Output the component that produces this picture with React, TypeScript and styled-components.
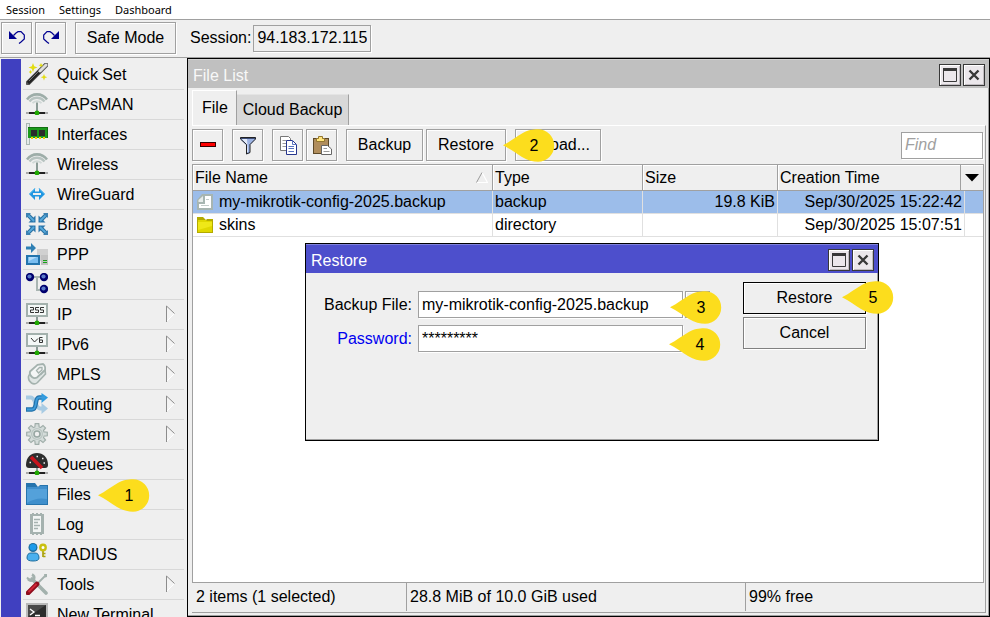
import React from "react";
import styled, { createGlobalStyle } from "styled-components";

const face = "#efefef";
const edge = "#a0a0a0";
const ui = '"Liberation Sans", Arial, sans-serif';

const GlobalStyle = createGlobalStyle`
  *, *::before, *::after { box-sizing: border-box; }
  body { margin: 0; background: ${face}; overflow: hidden; }
  body, button, input, select, table { font: 16px/18px ${ui}; color: #000; }
  button, input, select { margin: 0; padding: 0; border-radius: 0; outline: none; }
  svg { display: block; flex: none; }
`;

/* ---------- page frame ---------- */

const Page = styled.div`
  display: flex;
  flex-direction: column;
  height: 100vh;
  background: ${face};
`;

const MenuBar = styled.nav`
  display: flex;
  height: 20px;
  padding: 0 6px;
  gap: 14px;
  background: #fff;
  border-bottom: 1px solid ${edge};
`;

const MenuButton = styled.button`
  border: 0;
  background: none;
  font: 11px/18px "Noto Sans", "Open Sans", sans-serif;
`;

const MainToolbar = styled.div`
  display: flex;
  align-items: flex-start;
  height: 38px;
  padding: 2px 1px;
  border-bottom: 1px solid ${edge};
`;

const Button = styled.button<{ $w?: number; $ml?: number; $line?: string }>`
  display: flex;
  align-items: center;
  justify-content: center;
  position: relative;
  flex: none;
  height: 32px;
  width: ${(p) => p.$w ?? 31}px;
  margin-left: ${(p) => p.$ml ?? 0}px;
  background: ${face};
  border: 1px solid ${(p) => p.$line ?? edge};
  box-shadow: inset 1px 1px #fff, 1px 1px #fff;
`;

const SessionLabel = styled.label`
  display: flex;
  align-items: center;
  height: 32px;
  margin-left: 14px;
  gap: 2px;
`;

const Field = styled.input<{ $face?: boolean; $w?: string }>`
  height: 27px;
  width: ${(p) => p.$w ?? "100%"};
  padding: 0 3px;
  background: ${(p) => (p.$face ? face : "#fff")};
  border: 1px solid ${edge};
  box-shadow: 1px 1px #fff;
  &::placeholder { color: ${edge}; font-style: italic; opacity: 1; }
`;

const Body = styled.div`
  display: flex;
  flex: 1;
  min-height: 0;
`;

/* ---------- sidebar ---------- */

const Sidebar = styled.aside`
  display: flex;
  flex: none;
  width: 187px;
  padding: 1px 3px 0 1px;
  overflow: hidden;
`;

const Stripe = styled.div`
  flex: none;
  width: 20px;
  background: #4040c0;
`;

const NavList = styled.ul`
  flex: 1;
  margin: 1px 0 0 2px;
  padding: 0;
  list-style: none;
`;

const NavItem = styled.li`
  position: relative;
  height: 30px;
  border-bottom: 1px solid #d8d8d8;
`;

const NavButton = styled.button`
  display: flex;
  align-items: center;
  gap: 9px;
  width: 100%;
  height: 28px;
  padding: 0 9px 0 3px;
  border: 0;
  background: none;
`;

const NavText = styled.span`
  flex: 1;
  padding-top: 2px;
  text-align: left;
  white-space: nowrap;
`;

/* ---------- windows ---------- */

const Desktop = styled.main`
  position: relative;
  flex: 1;
  min-width: 0;
  display: flex;
`;

const FileWindow = styled.section`
  display: flex;
  flex-direction: column;
  flex: 1;
  min-width: 0;
  border: 1px solid #000;
  background: ${face};
  box-shadow: inset -1px -1px ${edge};
`;

const RestoreWindow = styled.section`
  position: absolute;
  left: 118px;
  top: 185px;
  width: 574px;
  height: 198px;
  border: 1px solid #000;
  background: ${face};
  box-shadow: inset -1px -1px ${edge};
`;

const TitleBar = styled.header<{ $active?: boolean }>`
  display: flex;
  align-items: center;
  flex: none;
  gap: 2px;
  height: 29px;
  padding: 2px 4px 0 5px;
  color: ${(p) => (p.$active ? "#fff" : "#f8f8f8")};
  background: ${(p) => (p.$active ? "#4d4fcc" : "#c0c0c0")};
  border-top: 1px solid ${(p) => (p.$active ? "#8082dc" : "#d0d0d0")};
`;

const Title = styled.h2`
  flex: 1;
  margin: 0;
  padding-top: 2px;
  font: inherit;
`;

const TitleButton = styled.button`
  display: flex;
  align-items: center;
  justify-content: center;
  width: 22px;
  height: 22px;
  border: 1px solid #383838;
  background: #ebe7eb;
  box-shadow: inset 1px 1px #fff, inset -1px -1px #c0bcc0;
`;

const Tabs = styled.div`
  display: flex;
  align-items: flex-end;
  flex: none;
  height: 37px;
  padding: 2px 4px 0 4px;
`;

const Tab = styled.button<{ $on?: boolean }>`
  height: ${(p) => (p.$on ? 35 : 31)}px;
  padding: ${(p) => (p.$on ? "0 8px 0 9px" : "0 6px 0 6px")};
  border: 0;
  border-top: 1px solid ${(p) => (p.$on ? "#fff" : "#e4e4e4")};
  border-left: ${(p) => (p.$on ? "1px solid #fff" : 0)};
  border-right: 1px solid ${edge};
  background: ${(p) => (p.$on ? face : "#d8d8d8")};
`;

const TabPanel = styled.div`
  display: flex;
  flex-direction: column;
  flex: 1;
  min-height: 0;
  margin: 0 3px 3px 4px;
  padding-right: 1px;
  border-top: 1px solid #fff;
  border-right: 1px solid ${edge};
  border-bottom: 1px solid ${edge};
`;

const Tools = styled.div`
  display: flex;
  flex: none;
  align-items: center;
  height: 38px;
  padding: 0 1px 0 0;
`;

const Spacer = styled.div`
  flex: 1;
`;

/* ---------- table ---------- */

const TableBox = styled.div`
  flex: 1;
  min-height: 0;
  background: #fff;
  border: 1px solid ${edge};
`;

const Table = styled.table`
  width: 100%;
  table-layout: fixed;
  border-collapse: separate;
  border-spacing: 0;
`;

const Col = styled.col<{ $w?: number }>`
  width: ${(p) => (p.$w ? `${p.$w}px` : "auto")};
`;

const Th = styled.th`
  height: 26px;
  padding: 0 0 0 2px;
  font-weight: 400;
  text-align: left;
  background: ${face};
  border-right: 1px solid ${edge};
  border-bottom: 1px solid ${edge};
  box-shadow: inset 1px 1px #fff;
  &:last-child { border-right: 0; }
`;

const HeadCell = styled.div`
  display: flex;
  align-items: center;
  justify-content: space-between;
  height: 25px;
  padding-right: 4px;
`;

const ColumnMenuHead = styled(HeadCell)`
  padding-right: 0;
`;

const ColumnMenu = styled.button`
  display: flex;
  align-items: center;
  justify-content: center;
  width: 23px;
  height: 25px;
  border: 0;
  border-left: 1px solid ${edge};
  background: none;
`;

const Row = styled.tr<{ $selected?: boolean }>`
  background: ${(p) => (p.$selected ? "#9cbdea" : "#fff")};
`;

const Td = styled.td<{ $right?: boolean }>`
  height: 23px;
  padding: 0 2px;
  white-space: nowrap;
  text-align: ${(p) => (p.$right ? "right" : "left")};
  border-right: 1px solid #e0e0e0;
  border-bottom: 1px solid #e0e0e0;
  &:last-child { border-right: 0; }
`;

const FileCell = styled.span`
  display: flex;
  align-items: center;
  gap: 6px;
  padding-left: 2px;
`;

const StatusBar = styled.footer`
  display: grid;
  grid-template-columns: 214px 339px 1fr;
  flex: none;
  height: 29px;
  padding-bottom: 1px;
  margin-left: 1px;
`;

const Status = styled.div`
  padding: 5px 3px 0;
  border-right: 1px solid ${edge};
  white-space: nowrap;
  &:last-child { border-right: 0; }
`;

/* ---------- restore form ---------- */

const Form = styled.form`
  display: grid;
  grid-template-columns: 1fr 123px;
  column-gap: 33px;
  padding: 9px 12px 0 8px;
`;

const Fields = styled.div`
  display: grid;
  grid-template-columns: 98px 1fr 25px;
  grid-auto-rows: 27px;
  row-gap: 7px;
  column-gap: 2px;
  padding-top: 9px;
`;

const FieldLabel = styled.label<{ $color?: string }>`
  display: flex;
  align-items: center;
  justify-content: flex-end;
  color: ${(p) => p.$color ?? "#000"};
`;

const FieldSlot = styled.div`
  position: relative;
  margin-left: 4px;
`;

const Picker = styled.select`
  display: block;
  appearance: none;
  width: 100%;
  height: 27px;
  padding: 0 3px;
  background: #fff;
  border: 1px solid ${edge};
  box-shadow: 1px 1px #fff;
`;

const PickerButton = styled.button`
  display: flex;
  align-items: center;
  justify-content: center;
  height: 27px;
  border: 1px solid ${edge};
  background: ${face};
  box-shadow: inset 1px 1px #fff, 1px 1px #fff;
`;

const Actions = styled.div`
  display: flex;
  flex-direction: column;
  gap: 3px;
`;

/* ---------- numbered callouts ---------- */

const Pin = styled.span<{ $x: number; $y: number }>`
  position: absolute;
  left: ${(p) => p.$x}px;
  top: ${(p) => p.$y}px;
  z-index: 2;
  display: grid;
  width: 52px;
  height: 33px;
  pointer-events: none;
`;

const PinShape = styled.svg`
  grid-area: 1 / 1;
`;

const PinText = styled.span`
  grid-area: 1 / 1;
  align-self: center;
  padding-left: 10px;
  text-align: center;
  z-index: 1;
`;

function Callout({ n, x, y }: { n: number; x: number; y: number }) {
  return (
    <Pin $x={x} $y={y}>
      <PinShape width="52" height="33" viewBox="0 0 52 33">
        <path d="M0 16.3C8 12 13 8 19 4.500C25 1 30 .3 35 .3A16.200 16.200 0 0 1 35 32.700C30 32.700 25 31.500 19 28C13 24.500 8 20.500 0 16.300Z" fill="#fcdd1d" />
      </PinShape>
      <PinText>{n}</PinText>
    </Pin>
  );
}

/* ---------- icons ---------- */

const Ico = ({ children, size = 22 }: { children: React.ReactNode; size?: number }) => (
  <svg width={size} height={size} viewBox={`0 0 ${size} ${size}`} aria-hidden="true">
    {children}
  </svg>
);

const Base = () => (
  <>
    <path d="M0 20H22" stroke="#aaa" strokeWidth="2" />
    <path d="M3 20H19" stroke="#222" strokeWidth="2" />
    <path d="M11 13V19" stroke="#8b9b96" strokeWidth="2" />
    <circle cx="11" cy="20" r="2.400" fill="#1fa800" />
  </>
);

const WandIcon = () => (
  <Ico>
    <path d="M2 20L20 2" stroke="#555" strokeWidth="4.800" strokeLinecap="round" />
    <path d="M2 20L14 8" stroke="#222" strokeWidth="3.400" />
    <path d="M3 18L13 8" stroke="#777" strokeWidth="1" />
    <path d="M14 8L20 2" stroke="#ddd" strokeWidth="3" strokeLinecap="round" />
    <path d="M7 0L8.200 3.200L11.500 4.500L8.200 5.700L7 9L5.800 5.700L2.500 4.500L5.800 3.200Z" fill="#e2dc10" />
    <path d="M18 11L18.900 13.300L21.300 14.200L18.900 15.100L18 17.500L17.100 15.100L14.700 14.200L17.100 13.300Z" fill="#e2dc10" />
    <path d="M15 0L15.700 1.600L17.300 2.200L15.700 2.900L15 4.500L14.300 2.900L12.700 2.200L14.300 1.600Z" fill="#e2dc10" />
    <path d="M3 9H6M4.500 7.500V10.500" stroke="#e2dc10" />
  </Ico>
);

const AntennaIcon = () => (
  <Ico>
    <path d="M1 6.500C4 2.500 7.500 1.400 11 1.400S18 2.500 21 6.500" fill="none" stroke="#9dadA8" strokeWidth="2.600" />
    <path d="M3.500 8.500C6 5.600 8.500 4.800 11 4.800S16 5.600 18.500 8.500" fill="none" stroke="#b7c3c0" strokeWidth="2.400" />
    <path d="M6.500 10.200C8 8.700 9.500 8.100 11 8.100S14 8.700 15.500 10.200" fill="none" stroke="#d0d8d6" strokeWidth="1.800" />
    <path d="M11 9.500V18" stroke="#8b9b96" strokeWidth="2" />
    <Base />
  </Ico>
);

const CardIcon = () => (
  <Ico>
    <rect x="0.500" y="0.500" width="3" height="21" fill="#e4eae9" stroke="#aab7b4" />
    <rect x="2" y="4" width="20" height="11" fill="#1c9a1c" />
    <path d="M2 4.500H22M21.500 4V15" stroke="#127012" />
    <rect x="5" y="7" width="6" height="6" fill="#2b2b2b" />
    <rect x="13" y="7" width="6" height="6" fill="#2b2b2b" />
    <path d="M5 15H20" stroke="#f2d20a" strokeWidth="2" strokeDasharray="2 2" />
  </Ico>
);

const WireGuardIcon = () => (
  <Ico>
    <path d="M3 11L9 5V8.500H13V5L19 11L13 17V13.500H9V17Z" fill="#2196e0" />
    <path d="M7 11H15" stroke="#efefef" strokeWidth="2" />
    <path d="M3.500 11L9 5.500M13 5.500L18.500 11" stroke="#5cc0f5" strokeWidth="1" />
  </Ico>
);

const BridgeIcon = () => (
  <Ico>
    {[0, 90, 180, 270].map((a) => (
      <g key={a} transform={`rotate(${a} 11 11)`}>
        <path d="M1 1L7 7" stroke="#2c6f9e" strokeWidth="4" />
        <path d="M9.500 2.500V9.500H2.500Z" fill="#2c77ab" />
        <path d="M1.500 1.500L8 8" stroke="#55a9dc" strokeWidth="1.800" />
        <path d="M0 0H5L0 5Z" fill="#3d82b2" />
      </g>
    ))}
  </Ico>
);

const PppIcon = () => (
  <Ico>
    <rect x="11" y="6" width="11" height="12" fill="#d0d0d0" />
    <rect x="15" y="12" width="7" height="10" fill="#c2c2c2" />
    <path d="M17 17.500H21M17 19.500H21" stroke="#17a317" />
    <path d="M0 3.500H5V0L10 5L5 10V6.500H0Z" fill="#2f80b4" />
    <rect x="1" y="13" width="12" height="8" fill="#79bdf0" stroke="#2374ad" strokeWidth="2" />
    <path d="M3 14H11L3 18Z" fill="#b3dbfa" />
  </Ico>
);

const MeshIcon = () => (
  <Ico>
    <path d="M4 4H18M11 4V17H18" fill="none" stroke="#a9b5b2" strokeWidth="2" />
    {[[4, 4], [18, 4], [18, 16]].map(([x, y]) => (
      <g key={`${x}-${y}`}>
        <circle cx={x} cy={y} r="4.200" fill="#00006e" />
        <circle cx={x - 0.500} cy={y - 0.500} r="2.100" fill="#5a7ac8" />
      </g>
    ))}
  </Ico>
);

const ScreenFrame = ({ children }: { children: React.ReactNode }) => (
  <Ico>
    <Base />
    <rect x="1" y="1" width="20" height="12" fill="#f4f8f7" stroke="#a3b1ad" strokeWidth="2" />
    {children}
  </Ico>
);

const IpIcon = () => (
  <ScreenFrame>
    <path
      d="M4 4.500H7.500V7H4.500V9.500H8M13 4.500H9.500V7H12.500V9.500H9M18 4.500H14.500V7H17.500V9.500H14"
      fill="none"
      stroke="#333"
    />
  </ScreenFrame>
);

const Ipv6Icon = () => (
  <ScreenFrame>
    <path d="M5 5L8.500 9L12 5.500M16.500 4.500H13.500V9.500H16.500V7H13.500" fill="none" stroke="#333" />
  </ScreenFrame>
);

const TagIcon = () => (
  <Ico>
    <path d="M3.500 11.500L7 8L15 11L19 6.500L19.500 11L11.500 19.500Q8.500 22 5.500 20Q2 17.500 2.500 13.500Z" fill="#dfe5e4" stroke="#a4b2ae" strokeWidth="1.600" />
    <path d="M4 8.500L11.500 1.800L17 1Q19.800 3 19 7L11 14.500Q8.500 16 6 14Q3 11.500 4 8.500Z" fill="#f4f6f6" stroke="#a4b2ae" strokeWidth="1.800" />
    <path d="M10.500 7.500L13.500 4.500H16V7L12.500 10Z" fill="#efefef" stroke="#a4b2ae" strokeWidth="1.300" />
  </Ico>
);

const RoutingIcon = () => (
  <Ico>
    <path d="M0 4.500H5C9 4.500 10 15.500 14 15.500H17" fill="none" stroke="#a8cbe3" strokeWidth="4" />
    <path d="M15.500 10L22 15.500L15.500 21Z" fill="#a8cbe3" />
    <path d="M0 16.500H6C12 16.500 8 4.500 13 4.500H17" fill="none" stroke="#2372ab" strokeWidth="4.400" />
    <path d="M15.500 0L22 4.500L15.500 10Z" fill="#2d9be0" />
    <path d="M1 16.500H6C12 16.500 8 4.500 13 4.500H19" fill="none" stroke="#3f9ddb" strokeWidth="1.800" />
  </Ico>
);

const GearIcon = () => (
  <Ico>
    {[0, 45, 90, 135, 180, 225, 270, 315].map((a) => (
      <path key={a} d="M8.600 6L9.200 .7H12.800L13.400 6Z" transform={`rotate(${a} 11 11)`} fill="#d3dbd9" stroke="#a0aeaa" strokeWidth="1.200" />
    ))}
    <circle cx="11" cy="11" r="6.800" fill="#d9e0de" />
    <circle cx="11" cy="11" r="5.400" fill="none" stroke="#bcc7c4" strokeWidth="1.400" />
    <circle cx="11" cy="11" r="3" fill="#efefef" stroke="#98a7a3" strokeWidth="1.600" />
  </Ico>
);

const GaugeIcon = () => (
  <Ico>
    <Base />
    <path d="M0 12C0 4 5 0 11 0S22 4 22 12C22 14 21 15 19 15H3C1 15 0 14 0 12Z" fill="#2d2d2d" />
    <path d="M3.500 9.500H5M5.500 5H7M10.500 3.500H12M16 5.500H17.500M17.500 10H19" stroke="#eee" strokeWidth="1.500" />
    <path d="M5 4L16 15" stroke="#c8141d" strokeWidth="3.600" />
  </Ico>
);

const FolderIcon = () => (
  <Ico>
    <path d="M0 0H9L12 4L14 2H22V22H0Z" fill="#2674ad" />
    <path d="M1 4H12L14 3H21V21H1Z" fill="#3f8fcc" />
    <path d="M1 6H21V16Q10 14 1 20Z" fill="#54a1da" />
  </Ico>
);

const LogIcon = () => (
  <Ico>
    <path d="M4 1H6V0H8V1H10V0H12V1H14V0H16V1H18V21H16V22H14V21H12V22H10V21H8V22H6V21H4Z" fill="#a5b2af" />
    <rect x="7" y="3" width="8" height="16" fill="#f2f5f4" />
    <path d="M8 6.500H14M8 9.500H12M8 12.500H14M8 15.500H12" stroke="#a5b2af" strokeWidth="1.400" />
  </Ico>
);

const RadiusIcon = () => (
  <Ico>
    <circle cx="7" cy="4.500" r="4.500" fill="#1d6d9e" />
    <circle cx="7" cy="4.300" r="3.300" fill="#1c9bea" />
    <path d="M1 15Q1 10 5 10H9Q13 10 13 15Q13 18 7 18T1 15Z" fill="#4ab0ee" stroke="#1d6d9e" />
    <path d="M17 7V14M17 10.500H19.500M17 13.500H19.500" stroke="#aaa20c" strokeWidth="1.700" />
    <circle cx="17" cy="4.500" r="2.700" fill="#fff" stroke="#c9c010" strokeWidth="2.400" />
  </Ico>
);

const ToolsIcon = () => (
  <Ico>
    <path d="M6 6L20 20" stroke="#a3b1ad" strokeWidth="3.600" strokeLinecap="round" />
    <path d="M2 6Q5 9 8 6Q9 3 6 1.500" fill="none" stroke="#a3b1ad" strokeWidth="2.600" />
    <path d="M1 4.500L3.500 7" stroke="#a3b1ad" strokeWidth="2" />
    <path d="M11 11L20 2" stroke="#a3b1ad" strokeWidth="1.800" />
    <path d="M18 1H21V4L19 4.500Z" fill="#a3b1ad" />
    <path d="M2 20L11 11" stroke="#8e0d1c" strokeWidth="4.600" strokeLinecap="round" />
    <path d="M2.500 19L10.500 11" stroke="#d02637" strokeWidth="2" />
  </Ico>
);

const TerminalIcon = () => (
  <Ico>
    <rect width="22" height="22" fill="#b9b9b9" />
    <rect x="2" y="2" width="18" height="18" fill="#2c2c2c" />
    <path d="M20 2L2 14V2Z" fill="#4a4a4a" />
    <path d="M4 6L8 9L4 12M9 12.500H14" fill="none" stroke="#fff" strokeWidth="1.300" />
  </Ico>
);

const SubmenuArrow = () => (
  <svg width="9" height="18" viewBox="0 0 9 18" aria-hidden="true">
    <path d="M.5 1V17L8.500 8.500Z" fill="#f4f4f4" />
    <path d="M.5 16.500L8.500 8.500" stroke="#fff" />
    <path d="M.5 17V1L8.500 8.500" fill="none" stroke="#8c8c8c" />
  </svg>
);

const UndoIcon = ({ flip }: { flip?: boolean }) => (
  <svg width="18" height="14" viewBox="0 0 18 14" aria-hidden="true">
    <g transform={flip ? "translate(18 0) scale(-1 1)" : undefined}>
      <path d="M1 0V8H9Z" fill="#000090" />
      <path d="M5.500 4.500L8 2L10 .7H13L16.300 4V8L13 11L11 12.500" fill="none" stroke="#000090" strokeWidth="1.200" />
    </g>
  </svg>
);

const MinusIcon = () => (
  <Ico size={16}>
    <rect x="0.500" y="5.500" width="15" height="4" fill="#f00" stroke="#300" />
  </Ico>
);

const FunnelIcon = () => (
  <Ico size={20}>
    <path d="M2 2H18V4L12 10V18L8 19.500V10L2 4Z" fill="#9db4e4" />
    <path d="M4 4H9L10 17H9V10Z" fill="#e3ebfa" />
    <path d="M2.500 2.500H17.500V4L12 9.500V17.500L8.500 19V9.500L2.500 4Z" fill="none" stroke="#222" />
    <path d="M3 3.500H17" stroke="#3c4d78" />
  </Ico>
);

const CopyIcon = () => (
  <Ico size={20}>
    <path d="M2.500 1.500H10.500L12.500 3.500V15.500H2.500Z" fill="#fff" stroke="#777" />
    <path d="M4.500 5.500H8M4.500 8.500H8M4.500 11.500H8" stroke="#999" />
    <path d="M8.500 5.500H14.500L18.500 9.500V19.500H8.500Z" fill="#fff" stroke="#26358c" />
    <path d="M14.500 5.500V9.500H18.500M10.500 11.500H16M10.500 13.500H16M10.500 16.500H16" fill="none" stroke="#5a73c0" />
  </Ico>
);

const PasteIcon = () => (
  <Ico size={20}>
    <rect x="1.500" y="3.500" width="15" height="15" fill="#b08d5c" stroke="#5d4928" />
    <path d="M4.500 6.500V3.500H6.500V1.500H10.500V3.500H12.500V6.500Z" fill="#ffe47c" stroke="#94772f" />
    <path d="M9.500 10.500H15.500L19.500 14V19.500H9.500Z" fill="#fff" stroke="#666" />
    <path d="M11.500 13.500H15M11.500 16.500H17.500" stroke="#999" />
  </Ico>
);

const BackupFileIcon = () => (
  <Ico size={16}>
    <path d="M5 0H16V16H0V6Z" fill="#a7b5b1" />
    <path d="M8 2H14V14H2V10H8Z" fill="#fff" />
    <path d="M6 2V8H1.500V6Z" fill="#e6ebea" />
    <path d="M4 11.500H12M9 5.500H12" stroke="#c3cdca" strokeWidth="1.200" />
  </Ico>
);

const DirectoryIcon = () => (
  <Ico size={16}>
    <path d="M0 0H6L9 3L10 2H16V16H0Z" fill="#b3aa00" />
    <path d="M1 3H9L10 4H15V15H1Z" fill="#e0d800" />
    <path d="M1 5H15V9L1 13Z" fill="#efe818" />
  </Ico>
);

const SortIcon = () => (
  <Ico size={12}>
    <path d="M6 .5L11.500 10.500H.5" fill="none" stroke="#fff" strokeWidth="1.200" />
    <path d="M.5 10.500L6 .5" stroke="#999" />
  </Ico>
);

const DropIcon = () => (
  <svg width="14" height="8" viewBox="0 0 14 8" aria-hidden="true">
    <path d="M0 0H14L7 7.500Z" />
  </svg>
);

const MaxIcon = () => (
  <Ico size={14}>
    <path d="M.5 .5H13.500V13.500H.5Z" fill="none" stroke="#383838" />
    <path d="M0 1.500H14" stroke="#383838" strokeWidth="3" />
  </Ico>
);

const CloseIcon = () => (
  <Ico size={12}>
    <path d="M1.500 1.500L10.500 10.500M10.500 1.500L1.500 10.500" stroke="#383838" strokeWidth="2.400" />
  </Ico>
);

function WindowButtons() {
  return (
    <>
      <TitleButton type="button" aria-label="Maximize"><MaxIcon /></TitleButton>
      <TitleButton type="button" aria-label="Close"><CloseIcon /></TitleButton>
    </>
  );
}

/* ---------- data ---------- */

const nav: { label: string; icon: React.FC; sub?: boolean; pin?: number }[] = [
  { label: "Quick Set", icon: WandIcon },
  { label: "CAPsMAN", icon: AntennaIcon },
  { label: "Interfaces", icon: CardIcon },
  { label: "Wireless", icon: AntennaIcon },
  { label: "WireGuard", icon: WireGuardIcon },
  { label: "Bridge", icon: BridgeIcon },
  { label: "PPP", icon: PppIcon },
  { label: "Mesh", icon: MeshIcon },
  { label: "IP", icon: IpIcon, sub: true },
  { label: "IPv6", icon: Ipv6Icon, sub: true },
  { label: "MPLS", icon: TagIcon, sub: true },
  { label: "Routing", icon: RoutingIcon, sub: true },
  { label: "System", icon: GearIcon, sub: true },
  { label: "Queues", icon: GaugeIcon },
  { label: "Files", icon: FolderIcon, pin: 1 },
  { label: "Log", icon: LogIcon },
  { label: "RADIUS", icon: RadiusIcon },
  { label: "Tools", icon: ToolsIcon, sub: true },
  { label: "New Terminal", icon: TerminalIcon },
];

const files = [
  { name: "my-mikrotik-config-2025.backup", icon: BackupFileIcon, type: "backup", size: "19.8 KiB", time: "Sep/30/2025 15:22:42", selected: true },
  { name: "skins", icon: DirectoryIcon, type: "directory", size: "", time: "Sep/30/2025 15:07:51", selected: false },
];

/* ---------- parts ---------- */

function FileTable() {
  return (
    <TableBox>
      <Table>
        <colgroup>
          <Col />
          <Col $w={150} />
          <Col $w={135} />
          <Col $w={187} />
          <Col $w={18} />
        </colgroup>
        <thead>
          <tr>
            <Th scope="col"><HeadCell>File Name<SortIcon /></HeadCell></Th>
            <Th scope="col">Type</Th>
            <Th scope="col">Size</Th>
            <Th scope="col" colSpan={2}>
              <ColumnMenuHead>
                Creation Time
                <ColumnMenu type="button" aria-label="Columns"><DropIcon /></ColumnMenu>
              </ColumnMenuHead>
            </Th>
          </tr>
        </thead>
        <tbody>
          {files.map((f) => (
            <Row key={f.name} $selected={f.selected}>
              <Td><FileCell><f.icon />{f.name}</FileCell></Td>
              <Td>{f.type}</Td>
              <Td $right>{f.size}</Td>
              <Td $right>{f.time}</Td>
              <Td />
            </Row>
          ))}
        </tbody>
      </Table>
    </TableBox>
  );
}

function RestoreDialog() {
  return (
    <RestoreWindow aria-label="Restore">
      <TitleBar $active>
        <Title>Restore</Title>
        <WindowButtons />
      </TitleBar>
      <Form onSubmit={(e) => e.preventDefault()}>
        <Fields>
          <FieldLabel htmlFor="backup-file">Backup File:</FieldLabel>
          <FieldSlot>
            <Picker id="backup-file" defaultValue={files[0].name}>
              <option>{files[0].name}</option>
            </Picker>
            <Callout n={3} x={252} y={0} />
          </FieldSlot>
          <PickerButton type="button" aria-label="Choose backup file"><DropIcon /></PickerButton>
          <FieldLabel htmlFor="password" $color="#0000f0">Password:</FieldLabel>
          <FieldSlot>
            <Field id="password" defaultValue="*********" autoComplete="off" />
            <Callout n={4} x={251} y={3} />
          </FieldSlot>
        </Fields>
        <Actions>
          <Button type="submit" $w={123} $line="#000">
            Restore
            <Callout n={5} x={98} y={-2} />
          </Button>
          <Button type="button" $w={123} $line="#808080">Cancel</Button>
        </Actions>
      </Form>
    </RestoreWindow>
  );
}

export default function App() {
  return (
    <Page>
      <GlobalStyle />
      <MenuBar>
        <MenuButton type="button">Session</MenuButton>
        <MenuButton type="button">Settings</MenuButton>
        <MenuButton type="button">Dashboard</MenuButton>
      </MenuBar>
      <MainToolbar>
        <Button type="button" aria-label="Undo"><UndoIcon /></Button>
        <Button type="button" aria-label="Redo" $ml={3}><UndoIcon flip /></Button>
        <Button type="button" $w={101} $ml={9}>Safe Mode</Button>
        <SessionLabel>
          Session:
          <Field $face $w="118px" defaultValue="94.183.172.115" readOnly />
        </SessionLabel>
      </MainToolbar>
      <Body>
        <Sidebar>
          <Stripe />
          <NavList>
            {nav.map((item) => (
              <NavItem key={item.label}>
                <NavButton type="button">
                  <item.icon />
                  <NavText>{item.label}</NavText>
                  {item.sub && <SubmenuArrow />}
                </NavButton>
                {item.pin && <Callout n={item.pin} x={75} y={-1} />}
              </NavItem>
            ))}
          </NavList>
        </Sidebar>
        <Desktop>
          <FileWindow aria-label="File List">
            <TitleBar>
              <Title>File List</Title>
              <WindowButtons />
            </TitleBar>
            <Tabs role="tablist">
              <Tab type="button" role="tab" aria-selected="true" $on>File</Tab>
              <Tab type="button" role="tab" aria-selected="false">Cloud Backup</Tab>
            </Tabs>
            <TabPanel role="tabpanel">
              <Tools>
                <Button type="button" aria-label="Remove"><MinusIcon /></Button>
                <Button type="button" aria-label="Filter" $ml={9}><FunnelIcon /></Button>
                <Button type="button" aria-label="Copy" $ml={9}><CopyIcon /></Button>
                <Button type="button" aria-label="Paste" $ml={3}><PasteIcon /></Button>
                <Button type="button" $w={77} $ml={9}>Backup</Button>
                <Button type="button" $w={80} $ml={3}>Restore</Button>
                <Button type="button" $w={86} $ml={9}>
                  Upload...
                  <Callout n={2} x={-13} y={-1} />
                </Button>
                <Spacer />
                <Field $w="82px" placeholder="Find" aria-label="Find" />
              </Tools>
              <FileTable />
              <StatusBar>
                <Status>2 items (1 selected)</Status>
                <Status>28.8 MiB of 10.0 GiB used</Status>
                <Status>99% free</Status>
              </StatusBar>
            </TabPanel>
          </FileWindow>
          <RestoreDialog />
        </Desktop>
      </Body>
    </Page>
  );
}
